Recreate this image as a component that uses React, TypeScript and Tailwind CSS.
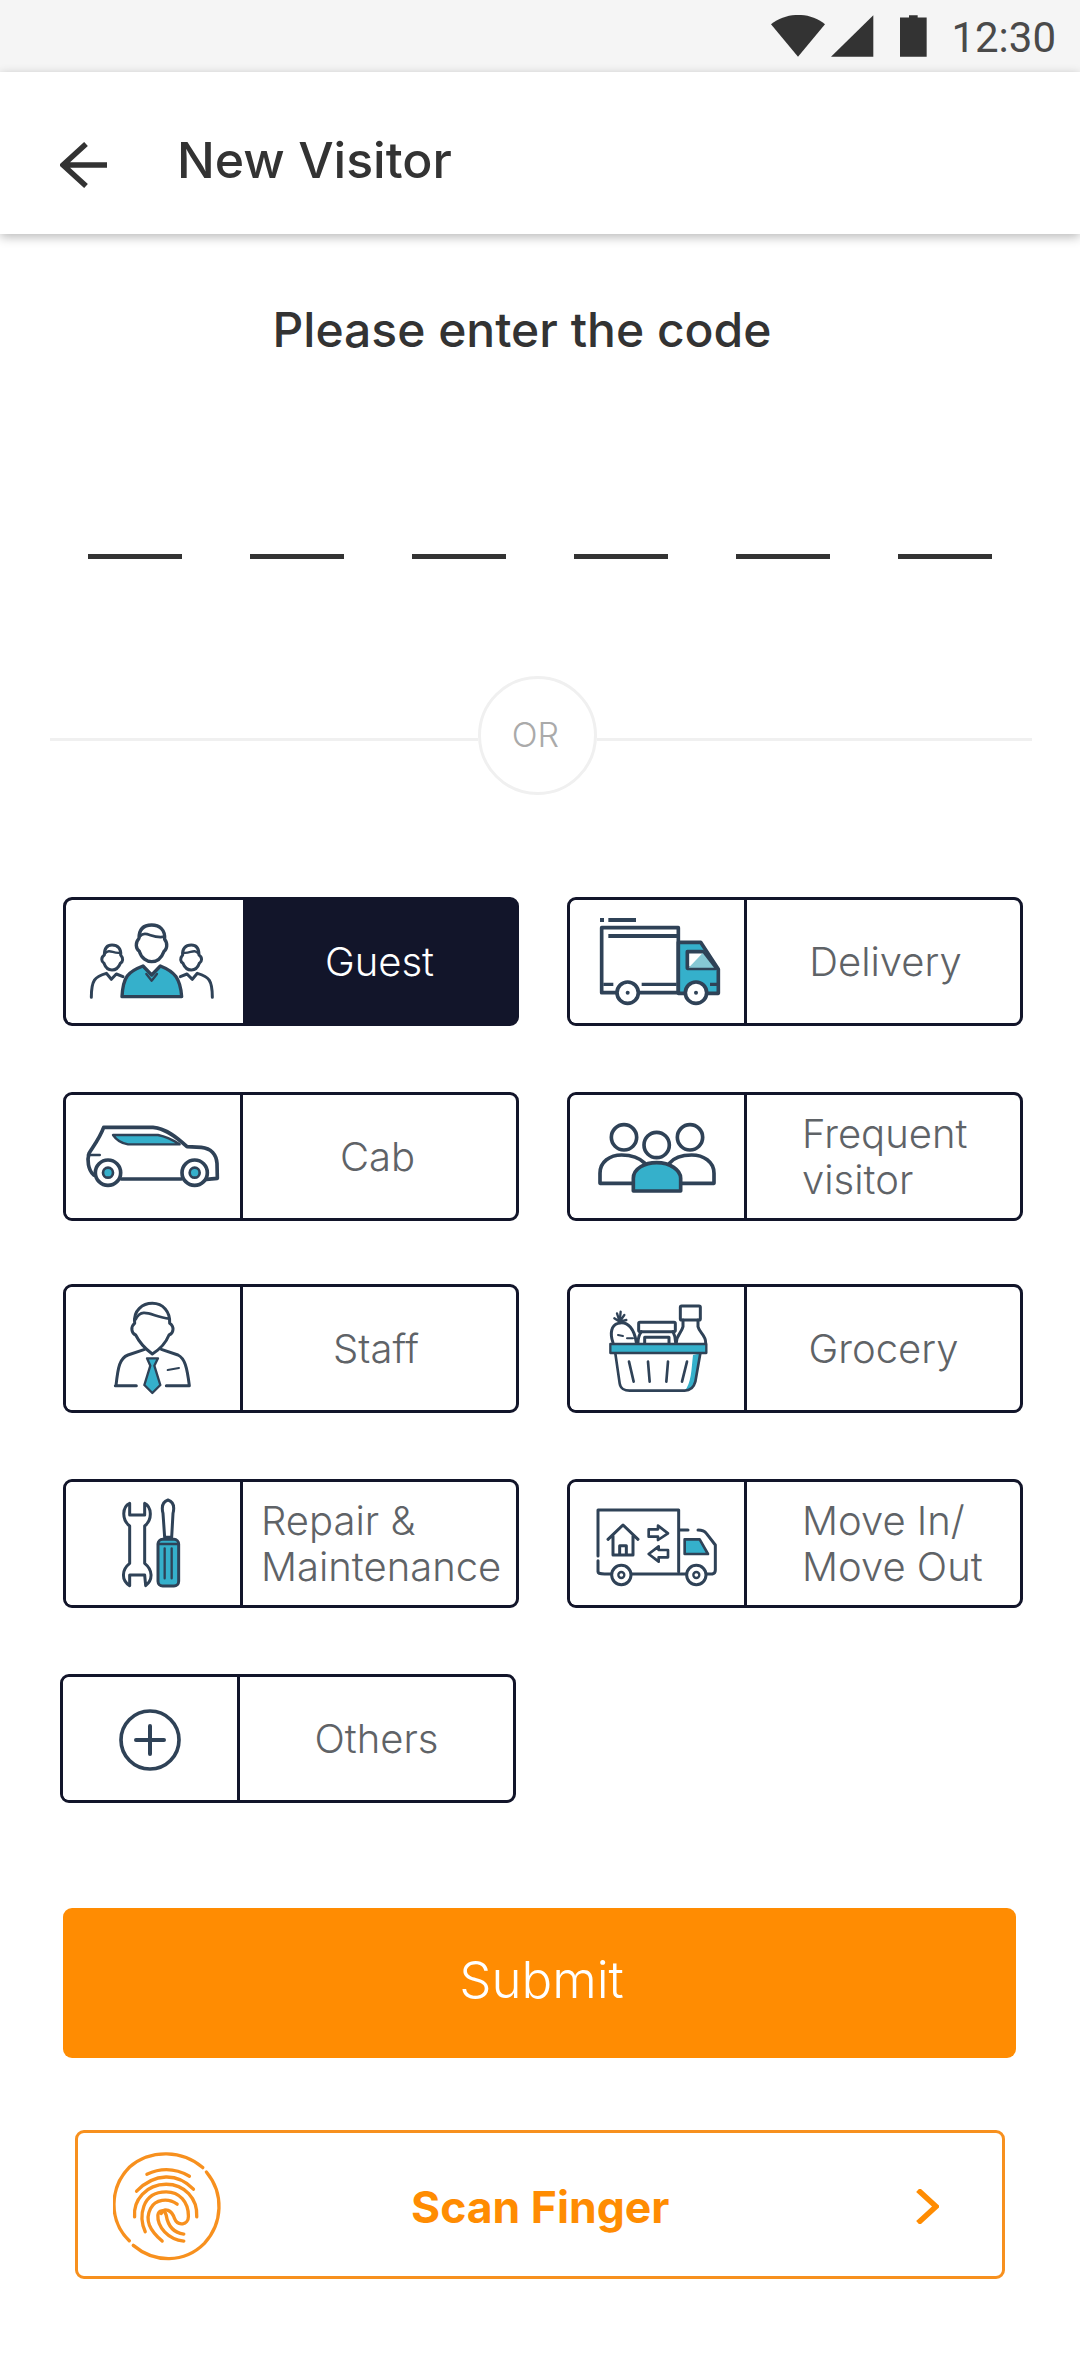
import type { ReactNode } from 'react';

const INK = '#2f4257';
const TEAL = '#35b0cb';

// Icons are drawn in 3x units, so each cell (174x123) has a 522x369 viewBox
function IconBox({ box, children }: { box: string; children: ReactNode }) {
  return (
    <svg
      viewBox={box}
      className="block w-[174px] h-[123px]"
      fill="none"
      stroke={INK}
      strokeWidth={10}
      strokeLinejoin="round"
      strokeLinecap="round"
    >
      {children}
    </svg>
  );
}

function GuestIcon() {
  return (
    <IconBox box="49 60 522 369">
      <path d="M268 175C268 145 285 135 306 135C330 135 347 150 345 178C355 190 352 208 343 214C335 235 320 245 306 245C292 245 275 235 269 214C258 205 256 188 268 175Z" />
      <path d="M270 170C290 148 305 178 345 170" strokeWidth={8} />
      <path d="M217 350C220 290 235 275 280 258L306 285L332 258C375 275 392 295 396 350Z" fill={TEAL} />
      <path d="M290 282L306 302L322 282" strokeWidth={7} />
      <path d="M164 225C164 205 172 195 187 195C205 195 215 207 213 225C222 235 220 245 212 250C206 265 197 270 187 270C177 270 168 265 163 250C155 245 153 232 164 225Z" strokeWidth={9} />
      <path d="M166 220C180 205 190 222 212 218" strokeWidth={7} />
      <path d="M125 352C125 300 135 290 170 280L185 298L200 282L220 290" strokeWidth={9} />
      <path d="M448 225C448 205 440 195 425 195C407 195 397 207 399 225C390 235 392 245 400 250C406 265 415 270 425 270C435 270 444 265 449 250C457 245 459 232 448 225Z" strokeWidth={9} />
      <path d="M446 220C432 205 422 222 400 218" strokeWidth={7} />
      <path d="M488 352C488 300 478 290 443 280L428 298L412 282L392 290" strokeWidth={9} />
    </IconBox>
  );
}

function CabIcon() {
  return (
    <IconBox box="49 645 522 369">
      <path d="M132 885C115 870 112 840 118 820C130 800 150 775 162 742L310 742C350 745 385 775 412 800L455 802C485 805 500 825 502 850L503 895L470 898" strokeWidth={11} />
      <path d="M395 897L215 897" strokeWidth={11} />
      <path d="M115 825L150 825" strokeWidth={8} />
      <path d="M190 765L325 765C350 770 370 780 390 793L235 793C215 790 200 780 190 765Z" fill={TEAL} strokeWidth={7} />
      <circle cx="175" cy="878" r="38" fill="#fff" strokeWidth={11} />
      <circle cx="175" cy="878" r="15" fill={TEAL} strokeWidth={8} />
      <circle cx="435" cy="878" r="38" fill="#fff" strokeWidth={11} />
      <circle cx="435" cy="878" r="15" fill={TEAL} strokeWidth={8} />
    </IconBox>
  );
}

function DeliveryIcon() {
  return (
    <IconBox box="60 60 522 369">
      <path d="M150 120H162M175 120H258" strokeWidth={12} strokeLinecap="butt" />
      <path d="M385 338H155V143H385V338" strokeWidth={11} />
      <path d="M175 168H385" strokeWidth={12} strokeLinecap="butt" />
      <path d="M160 313H190M275 313H380" strokeWidth={10} strokeLinecap="butt" />
      <path d="M385 187H452L505 268V340H385Z" fill={TEAL} strokeWidth={11} />
      <path d="M412 215H458L497 265H412Z" fill="#fff" strokeWidth={11} />
      <path d="M458 219L492 263H416Z" fill="#86c8d4" stroke="none" />
      <path d="M480 313H505" strokeLinecap="butt" />
      <circle cx="233" cy="338" r="32" fill="#fff" strokeWidth={11} />
      <circle cx="233" cy="338" r="6" fill={INK} stroke="none" />
      <circle cx="438" cy="338" r="32" fill="#fff" strokeWidth={11} />
      <circle cx="438" cy="338" r="6" fill={INK} stroke="none" />
    </IconBox>
  );
}

function FrequentIcon() {
  return (
    <IconBox box="60 645 522 369">
      <circle cx="222" cy="772" r="38" strokeWidth={11} />
      <circle cx="420" cy="772" r="38" strokeWidth={11} />
      <circle cx="320" cy="795" r="38" strokeWidth={11} />
      <path d="M250 910H150V880C150 845 180 825 215 825C245 825 270 835 285 850" strokeWidth={11} />
      <path d="M390 910H492V880C492 845 460 825 425 825C395 825 370 835 358 850" strokeWidth={11} />
      <path d="M250 933V895C250 865 285 848 320 848C360 848 392 870 392 895V933Z" fill={TEAL} strokeWidth={11} />
    </IconBox>
  );
}

function StaffIcon() {
  return (
    <IconBox box="49 51 522 369">
      <path d="M255 160C250 120 280 100 308 100C340 100 362 125 360 160C375 170 372 190 358 195C350 215 335 235 308 252C285 235 268 215 258 195C245 190 242 170 255 160Z" strokeWidth={9} />
      <path d="M258 148C278 108 310 142 358 146" strokeWidth={8} />
      <path d="M199 347C205 290 210 265 235 255L285 238M197 347H260M419 347C412 290 405 265 385 255L335 238M350 347H419" strokeWidth={9} />
      <path d="M292 265L325 265L314 287L332 345L308 369L284 345L302 287Z" fill={TEAL} strokeWidth={7} />
      <path d="M354 300L388 294" strokeWidth={6} />
    </IconBox>
  );
}

function RepairIcon() {
  return (
    <IconBox box="49 636 522 369">
      <path d="M240 700C218 710 215 748 240 768V880C215 900 215 930 240 947V915H285L288 947C310 930 310 900 285 880V768C310 748 305 710 285 700V735H240Z" strokeWidth={9} />
      <path d="M355 690C340 695 335 710 340 730L345 802H366L370 730C375 710 370 695 355 690Z" strokeWidth={9} />
      <rect x="325" y="808" width="62" height="140" rx="14" fill={TEAL} strokeWidth={9} />
      <path d="M345 835V925M366 835V925M325 822H387" strokeWidth={7} />
    </IconBox>
  );
}

function GroceryIcon() {
  return (
    <IconBox box="61 51 522 369">
      <path d="M430 255L452 250L437 335C433 352 420 360 405 362C425 340 425 300 430 255Z" fill={TEAL} stroke="none" />
      <path d="M197 250L210 340C212 355 225 362 240 362H405C425 362 433 350 437 335L452 250" strokeWidth={8} />
      <path d="M238 275L252 335M295 275L300 335M355 275L350 335M412 275L397 335" strokeWidth={8} />
      <rect x="392" y="108" width="60" height="42" rx="4" strokeWidth={9} />
      <path d="M400 150V170C395 190 380 195 380 218M445 150V170C450 190 468 195 468 218" strokeWidth={9} />
      <rect x="267" y="157" width="110" height="28" rx="4" strokeWidth={9} />
      <path d="M275 185C268 195 265 205 265 218M370 185C375 195 378 205 378 218M285 218V202H358V218" strokeWidth={9} />
      <path d="M190 218C180 190 185 165 205 160C235 150 255 180 260 218" strokeWidth={9} />
      <path d="M210 155L202 130M210 155L213 125M210 155L224 135M210 155L194 145M210 155L230 150" strokeWidth={7} />
      <path d="M205 195L220 198M232 205L250 205" strokeWidth={6} />
      <rect x="182" y="222" width="288" height="27" fill={TEAL} stroke={INK} strokeWidth={7} />
    </IconBox>
  );
}

function MoveIcon() {
  return (
    <IconBox box="61 636 522 369">
      <path d="M145 858V720H387V905" strokeWidth={9} />
      <path d="M145 872V905C145 910 155 912 165 912H185M245 912H410M470 912H488C497 910 497 905 497 900V825L470 790C465 783 460 780 445 780M390 780H415" strokeWidth={9} />
      <path d="M405 808H450L475 852H405Z" fill={TEAL} strokeWidth={8} />
      <circle cx="215" cy="915" r="29" fill="#fff" strokeWidth={9} />
      <circle cx="215" cy="915" r="9" strokeWidth={7} />
      <circle cx="440" cy="915" r="29" fill="#fff" strokeWidth={9} />
      <circle cx="440" cy="915" r="9" strokeWidth={7} />
      <path d="M175 808L220 765L265 808M190 798V855H250V798M210 855V827H230V855" strokeWidth={9} />
      <path d="M297 778H325V767L355 790L325 810V800H297Z" strokeWidth={8} />
      <path d="M355 840H327V829L297 852L327 875V862H355Z" strokeWidth={8} />
    </IconBox>
  );
}

function OthersIcon() {
  return (
    <IconBox box="39 51 522 369">
      <circle cx="300" cy="240" r="87" strokeWidth={11} />
      <path d="M258 240H342M300 198V282" strokeWidth={12} />
    </IconBox>
  );
}

function FingerprintIcon() {
  return (
    <svg
      viewBox="185 125 328 328"
      className="block w-[109px] h-[109px] shrink-0 mt-[3px]"
      fill="none"
      stroke="#f7901e"
      strokeWidth={10}
      strokeLinecap="round"
    >
      <path d="M466 185C520 250 515 340 460 400C400 460 310 460 246 406" />
      <path d="M234 392C170 330 175 230 235 170C300 115 395 120 455 172" />
      <path d="M287 192C330 172 375 175 415 198" />
      <path d="M256 243C310 187 380 187 427 237" />
      <path d="M250 320C245 270 285 222 345 222C400 222 440 265 437 320" />
      <path d="M282 365C262 320 270 245 345 245C385 245 412 275 412 318C412 345 380 350 370 325C362 300 340 290 330 310" />
      <path d="M333 393C295 360 280 330 298 295C312 268 350 262 378 282" />
      <path d="M398 393C350 388 318 350 320 315C322 300 340 295 345 315C350 345 365 368 398 372" />
    </svg>
  );
}

type CardProps = {
  label: ReactNode;
  icon: ReactNode;
  active?: boolean;
  labelClass?: string;
};

function Card({ label, icon, active, labelClass }: CardProps) {
  return (
    <div
      className={
        active
          ? 'flex w-[456px] h-[129px] rounded-[9px] border-[3px] border-[#12152a] bg-[#12152a] overflow-hidden'
          : 'flex w-[456px] h-[129px] rounded-[9px] border-[3px] border-[#12152a] bg-white overflow-hidden'
      }
    >
      <div className="w-[174px] h-[123px] bg-white shrink-0 rounded-l-[6px] overflow-hidden">{icon}</div>
      <div className={active ? 'w-[3px] shrink-0 bg-white' : 'w-[3px] shrink-0 bg-[#12152a]'} />
      <div
        className={`flex-1 flex items-center text-[40px] leading-[46px] font-light ${active ? 'text-white' : 'text-[#5f6367]'} ${labelClass ?? 'justify-center'}`}
      >
        <div>{label}</div>
      </div>
    </div>
  );
}

export default function App() {
  return (
    <div className="w-[1080px] h-[2379px] bg-white font-['Inter',sans-serif] overflow-hidden">
      {/* status bar */}
      <div className="h-[72px] bg-[#f5f5f5] flex items-start justify-end pr-[24px] pt-[15px]">
        <svg viewBox="123 45 468 125" className="w-[156px] h-[42px] block" fill="#333">
          <path d="M123 72C170 35 240 35 285 72L204 170Z" />
          <path d="M430 45V170H303Z" />
          <path d="M510 52H537V45H563V52H590V170H510Z" />
        </svg>
        <span className="ml-[24px] font-['Roboto',sans-serif] text-[42px] leading-[46px] text-[#4a4a4a]">12:30</span>
      </div>

      {/* toolbar */}
      <div className="relative h-[162px] bg-white shadow-[0_3px_10px_rgba(0,0,0,0.28)] flex items-center pl-[60px]">
        <svg viewBox="0 0 47 46" className="w-[47px] h-[46px] block mt-[24px] shrink-0" fill="none" stroke="#333" strokeWidth={5.5}>
          <path d="M47 23H3M26 2L3 23L26 44" />
        </svg>
        <span className="ml-[70px] mt-[13px] text-[50px] leading-[56px] font-medium text-[#333]">New Visitor</span>
      </div>

      <div className="pt-[66px] text-center pr-[36px] text-[48px] leading-[60px] font-medium text-[#333]">
        Please enter the code
      </div>

      {/* code slots */}
      <div className="mt-[194px] pl-[88px] flex gap-[68px]">
        <div className="w-[94px] h-[5px] bg-[#333]" />
        <div className="w-[94px] h-[5px] bg-[#333]" />
        <div className="w-[94px] h-[5px] bg-[#333]" />
        <div className="w-[94px] h-[5px] bg-[#333]" />
        <div className="w-[94px] h-[5px] bg-[#333]" />
        <div className="w-[94px] h-[5px] bg-[#333]" />
      </div>

      {/* or divider */}
      <div className="mt-[117px] ml-[50px] w-[982px] flex items-center">
        <div className="w-[428px] h-[3px] mt-[8px] bg-[#f0f0f0]" />
        <div className="w-[119px] h-[119px] rounded-full border-[3px] border-[#f0f0f0] flex items-center justify-center pr-[4px] pb-[2px] text-[34px] font-light text-[#aaaaaa]">
          OR
        </div>
        <div className="flex-1 h-[3px] mt-[8px] bg-[#f0f0f0]" />
      </div>

      {/* visitor types */}
      <div className="mt-[102px] pl-[63px] flex gap-[48px]">
        <Card active label="Guest" icon={<GuestIcon />} />
        <Card label="Delivery" icon={<DeliveryIcon />} labelClass="justify-center pl-[4px]" />
      </div>
      <div className="mt-[66px] pl-[63px] flex gap-[48px]">
        <Card label="Cab" icon={<CabIcon />} labelClass="justify-center pr-[4px]" />
        <Card
          label={
            <>
              Frequent
              <br />
              visitor
            </>
          }
          icon={<FrequentIcon />}
          labelClass="pl-[55px]"
        />
      </div>
      <div className="mt-[63px] pl-[63px] flex gap-[48px]">
        <Card label="Staff" icon={<StaffIcon />} labelClass="justify-center pr-[7px]" />
        <Card label="Grocery" icon={<GroceryIcon />} />
      </div>
      <div className="mt-[66px] pl-[63px] flex gap-[48px]">
        <Card
          label={
            <>
              Repair &amp;
              <br />
              Maintenance
            </>
          }
          icon={<RepairIcon />}
          labelClass="pl-[18px]"
        />
        <Card
          label={
            <>
              Move In/
              <br />
              Move Out
            </>
          }
          icon={<MoveIcon />}
          labelClass="pl-[55px]"
        />
      </div>
      <div className="mt-[66px] pl-[60px]">
        <Card label="Others" icon={<OthersIcon />} />
      </div>

      <div className="mt-[105px] ml-[63px] w-[953px] h-[150px] rounded-[9px] bg-[#ff8c02] flex items-center justify-center pl-[4px] pb-[5px] text-[51px] font-light text-white">
        Submit
      </div>

      <div className="mt-[72px] ml-[75px] w-[930px] h-[149px] rounded-[9px] border-[3px] border-[#f7901e] flex items-center pl-[35px]">
        <FingerprintIcon />
        <div className="ml-[189px] mt-[5px] text-[#ff8c02] text-[44.5px] font-bold">Scan Finger</div>
        <svg viewBox="0 0 23 35" className="w-[23px] h-[35px] block ml-auto mr-[63px] mt-[4px]" fill="none" stroke="#ff8c02" strokeWidth={5.5}>
          <path d="M2 1L20 17.5L2 34" />
        </svg>
      </div>
    </div>
  );
}
